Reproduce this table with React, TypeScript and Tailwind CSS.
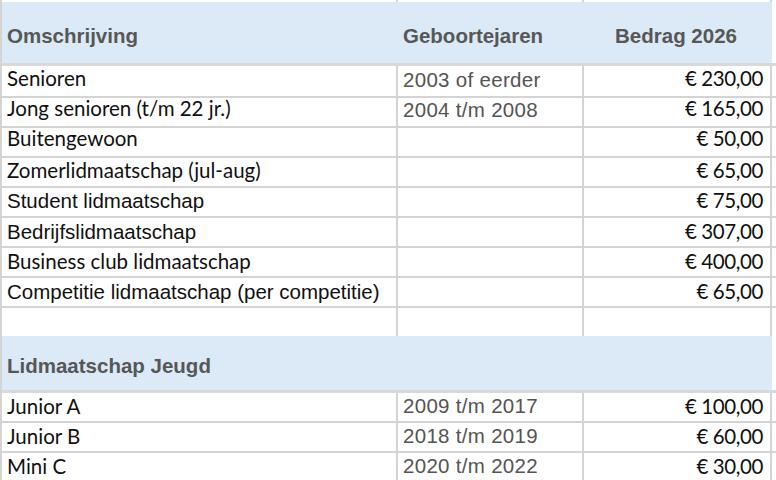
import React from "react";

type Row = { d: string; y?: string; a: string; f: "c" | "a"; lv: 0 | 1 | 2 };

const senior: Row[] = [
  { d: "Senioren", y: "2003 of eerder", a: "€ 230,00", f: "c", lv: 0 },
  { d: "Jong senioren (t/m 22 jr.)", y: "2004 t/m 2008", a: "€ 165,00", f: "c", lv: 0 },
  { d: "Buitengewoon", a: "€ 50,00", f: "c", lv: 0 },
  { d: "Zomerlidmaatschap (jul-aug)", a: "€ 65,00", f: "c", lv: 1 },
  { d: "Student lidmaatschap", a: "€ 75,00", f: "a", lv: 1 },
  { d: "Bedrijfslidmaatschap", a: "€ 307,00", f: "a", lv: 2 },
  { d: "Business club lidmaatschap", a: "€ 400,00", f: "c", lv: 2 },
  { d: "Competitie lidmaatschap (per competitie)", a: "€ 65,00", f: "a", lv: 2 },
];

const jeugd: Row[] = [
  { d: "Junior A", y: "2009 t/m 2017", a: "€ 100,00", f: "c", lv: 2 },
  { d: "Junior B", y: "2018 t/m 2019", a: "€ 60,00", f: "c", lv: 2 },
  { d: "Mini C", y: "2020 t/m 2022", a: "€ 30,00", f: "c", lv: 2 },
];

const CAL = "font-['Lato',sans-serif] text-[20.5px] text-[#111]";
const ARI = "font-['Liberation_Sans',Arial,sans-serif] text-[20.5px] text-[#111]";
const YEAR = "font-['Liberation_Sans',Arial,sans-serif] text-[20.5px] text-[#555] tracking-[0.3px]";

const CAL_PB = ["pb-[6px]", "pb-[4px]", "pb-[3px]"];
const ARI_PB = ["pb-[4px]", "pb-[3px]", "pb-[2px]"];
const YEAR_PB = ["pb-[4px]", "pb-[4px]", "pb-[3px]"];

function DataRow({ r, h }: { r: Row; h: string }) {
  const calPb = CAL_PB[r.lv];
  const descPb = r.f === "c" ? calPb : ARI_PB[r.lv];
  return (
    <div className={`flex ${h} border-b-2 border-[#d4d4d4]`}>
      <div className={`w-[396px] shrink-0 border-r-2 border-[#d4d4d4] pl-[5px] flex items-end ${descPb} leading-[24px] whitespace-nowrap ${r.f === "c" ? CAL : ARI}`}>
        {r.d}
      </div>
      <div className={`w-[186px] shrink-0 border-r-2 border-[#d4d4d4] pl-[5px] flex items-end ${YEAR_PB[r.lv]} leading-[24px] whitespace-nowrap ${YEAR}`}>
        {r.y ?? ""}
      </div>
      <div className={`w-[188px] shrink-0 border-r-2 border-[#d4d4d4] pr-[7px] flex items-end justify-end ${calPb} leading-[24px] whitespace-nowrap tracking-[-0.4px] ${CAL}`}>
        {r.a}
      </div>
      <div className="flex-1" />
    </div>
  );
}

function EmptyRow({ h }: { h: string }) {
  return (
    <div className={`flex ${h}`}>
      <div className="w-[396px] shrink-0 border-r-2 border-[#d4d4d4]" />
      <div className="w-[186px] shrink-0 border-r-2 border-[#d4d4d4]" />
      <div className="w-[188px] shrink-0 border-r-2 border-[#d4d4d4]" />
      <div className="flex-1" />
    </div>
  );
}

const HEAD = "font-['Liberation_Sans',Arial,sans-serif] font-bold text-[20.5px] text-[#575757] whitespace-nowrap";

export default function App() {
  return (
    <div className="w-[776px] h-[480px] overflow-hidden bg-white border-l-2 border-[#d4d4d4]">
      <EmptyRow h="h-[2px]" />
      <div className="flex h-[64px] border-b-[3px] border-[#d9d9d9]">
        <div className="w-[770px] shrink-0 bg-[#dbeaf6] flex items-center pt-[7px]">
          <div className={`w-[396px] pl-[5px] ${HEAD}`}>Omschrijving</div>
          <div className={`w-[186px] pl-[5px] ${HEAD}`}>Geboortejaren</div>
          <div className={`w-[188px] text-center pr-[4px] ${HEAD}`}>Bedrag 2026</div>
        </div>
        <div className="flex-1" />
      </div>
      {senior.map((r, i) => (
        <DataRow key={r.d} r={r} h={i === 0 ? "h-[32px]" : "h-[30px]"} />
      ))}
      <EmptyRow h="h-[28px]" />
      <div className="flex h-[57px] border-b-[3px] border-[#d9d9d9]">
        <div className="w-[770px] shrink-0 bg-[#dbeaf6] flex items-center pt-[6px]">
          <div className={`pl-[5px] ${HEAD}`}>Lidmaatschap Jeugd</div>
        </div>
        <div className="flex-1" />
      </div>
      {jeugd.map((r) => (
        <DataRow key={r.d} r={r} h="h-[30px]" />
      ))}
    </div>
  );
}
